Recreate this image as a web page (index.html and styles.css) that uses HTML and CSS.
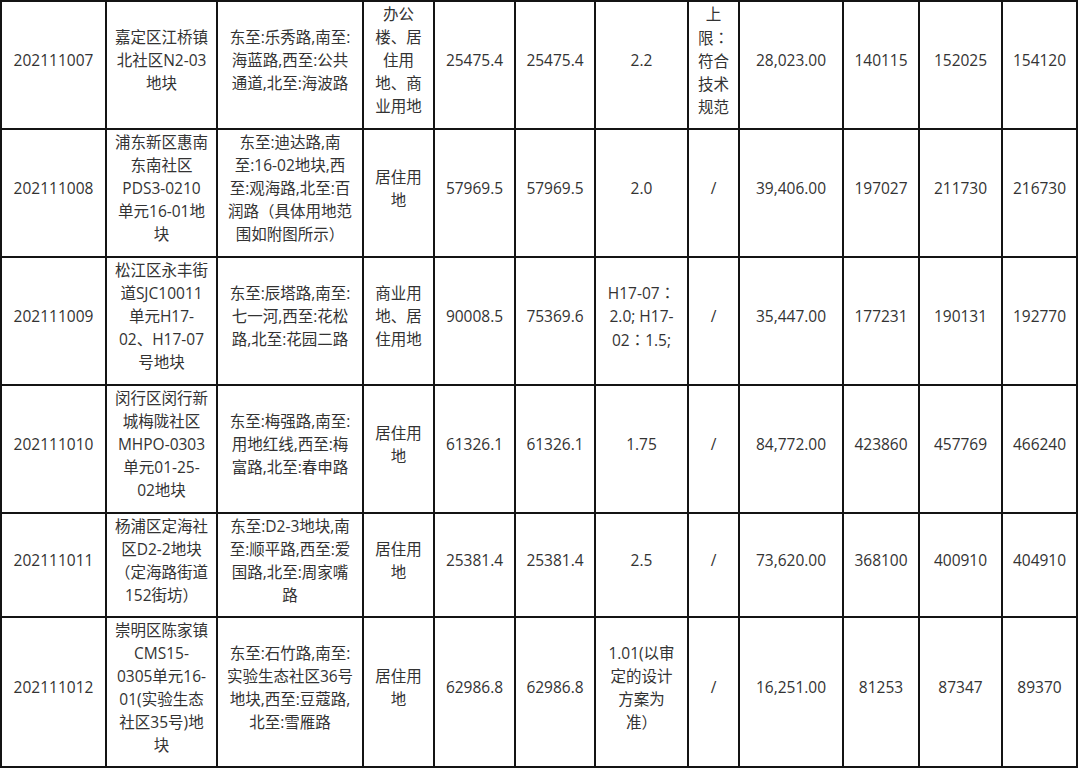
FILE: index.html
```html
<!DOCTYPE html>
<html lang="zh-CN">
<head>
<meta charset="utf-8">
<title>地块出让信息</title>
<link rel="stylesheet" href="styles.css">
</head>
<body>
<table class="land">
  <colgroup>
    <col class="c1"><col class="c2"><col class="c3"><col class="c4"><col class="c5"><col class="c6">
    <col class="c7"><col class="c8"><col class="c9"><col class="c10"><col class="c11"><col class="c12">
  </colgroup>
  <tbody>
    <tr class="r128">
      <td>202111007</td>
      <td>嘉定区江桥镇<br>北社区N2-03<br>地块</td>
      <td>东至:乐秀路,南至:<br>海蓝路,西至:公共<br>通道,北至:海波路</td>
      <td>办公<br>楼、居<br>住用<br>地、商<br>业用地</td>
      <td>25475.4</td>
      <td>25475.4</td>
      <td>2.2</td>
      <td>上<br>限<span class="fw" lang="zh-TW">：</span><br>符合<br>技术<br>规范</td>
      <td>28,023.00</td>
      <td>140115</td>
      <td>152025</td>
      <td>154120</td>
    </tr>
    <tr class="r128">
      <td>202111008</td>
      <td>浦东新区惠南<br>东南社区<br>PDS3-0210<br>单元16-01地<br>块</td>
      <td>东至:迪达路,南<br>至:16-02地块,西<br>至:观海路,北至:百<br>润路（具体用地范<br>围如附图所示）</td>
      <td>居住用<br>地</td>
      <td>57969.5</td>
      <td>57969.5</td>
      <td>2.0</td>
      <td>/</td>
      <td>39,406.00</td>
      <td>197027</td>
      <td>211730</td>
      <td>216730</td>
    </tr>
    <tr class="r128">
      <td>202111009</td>
      <td>松江区永丰街<br>道SJC10011<br>单元H17-<br>02、H17-07<br>号地块</td>
      <td>东至:辰塔路,南至:<br>七一河,西至:花松<br>路,北至:花园二路</td>
      <td>商业用<br>地、居<br>住用地</td>
      <td>90008.5</td>
      <td>75369.6</td>
      <td>H17-07<span class="fw" lang="zh-TW">：</span><br>2.0; H17-<br>02<span class="fw" lang="zh-TW">：</span>1.5;</td>
      <td>/</td>
      <td>35,447.00</td>
      <td>177231</td>
      <td>190131</td>
      <td>192770</td>
    </tr>
    <tr class="r128">
      <td>202111010</td>
      <td>闵行区闵行新<br>城梅陇社区<br>MHPO-0303<br>单元01-25-<br>02地块</td>
      <td>东至:梅强路,南至:<br>用地红线,西至:梅<br>富路,北至:春申路</td>
      <td>居住用<br>地</td>
      <td>61326.1</td>
      <td>61326.1</td>
      <td>1.75</td>
      <td>/</td>
      <td>84,772.00</td>
      <td>423860</td>
      <td>457769</td>
      <td>466240</td>
    </tr>
    <tr class="r104">
      <td>202111011</td>
      <td>杨浦区定海社<br>区D2-2地块<br>（定海路街道<br>152街坊）</td>
      <td>东至:D2-3地块,南<br>至:顺平路,西至:爱<br>国路,北至:周家嘴<br>路</td>
      <td>居住用<br>地</td>
      <td>25381.4</td>
      <td>25381.4</td>
      <td>2.5</td>
      <td>/</td>
      <td>73,620.00</td>
      <td>368100</td>
      <td>400910</td>
      <td>404910</td>
    </tr>
    <tr class="r150">
      <td>202111012</td>
      <td>崇明区陈家镇<br>CMS15-<br>0305单元16-<br>01(实验生态<br>社区35号)地<br>块</td>
      <td>东至:石竹路,南至:<br>实验生态社区36号<br>地块,西至:豆蔻路,<br>北至:雪雁路</td>
      <td>居住用<br>地</td>
      <td>62986.8</td>
      <td>62986.8</td>
      <td>1.01(以审<br>定的设计<br>方案为<br>准）</td>
      <td>/</td>
      <td>16,251.00</td>
      <td>81253</td>
      <td>87347</td>
      <td>89370</td>
    </tr>
  </tbody>
</table>
</body>
</html>
```

FILE: styles.css
```css
html, body {
  margin: 0;
  padding: 0;
  background: #ffffff;
}

body {
  font-family: "Open Sans", "Noto Sans CJK SC", sans-serif;
  font-size: 15.5px;
  line-height: 23px;
  color: #333333;
}

.land {
  border-collapse: collapse;
  table-layout: fixed;
  width: 1078px;
}

.land td {
  border: 2px solid #141414;
  text-align: center;
  vertical-align: middle;
  padding: 0 3px 9px;
  white-space: nowrap;
  overflow: hidden;
}

/* full-width colon drawn centred in its em box, as in the source */
.fw {
  font-family: "Noto Sans CJK TC", "Noto Sans CJK JP", sans-serif;
}

.c1 { width: 105px; }
.c2 { width: 111px; }
.c3 { width: 146px; }
.c4 { width: 71px; }
.c5 { width: 81px; }
.c6 { width: 80px; }
.c7 { width: 93px; }
.c8 { width: 51px; }
.c9 { width: 104px; }
.c10 { width: 76px; }
.c11 { width: 83px; }
.c12 { width: 75px; }

.r128 { height: 128px; }
.r104 { height: 104px; }
.r150 { height: 150px; }
```
